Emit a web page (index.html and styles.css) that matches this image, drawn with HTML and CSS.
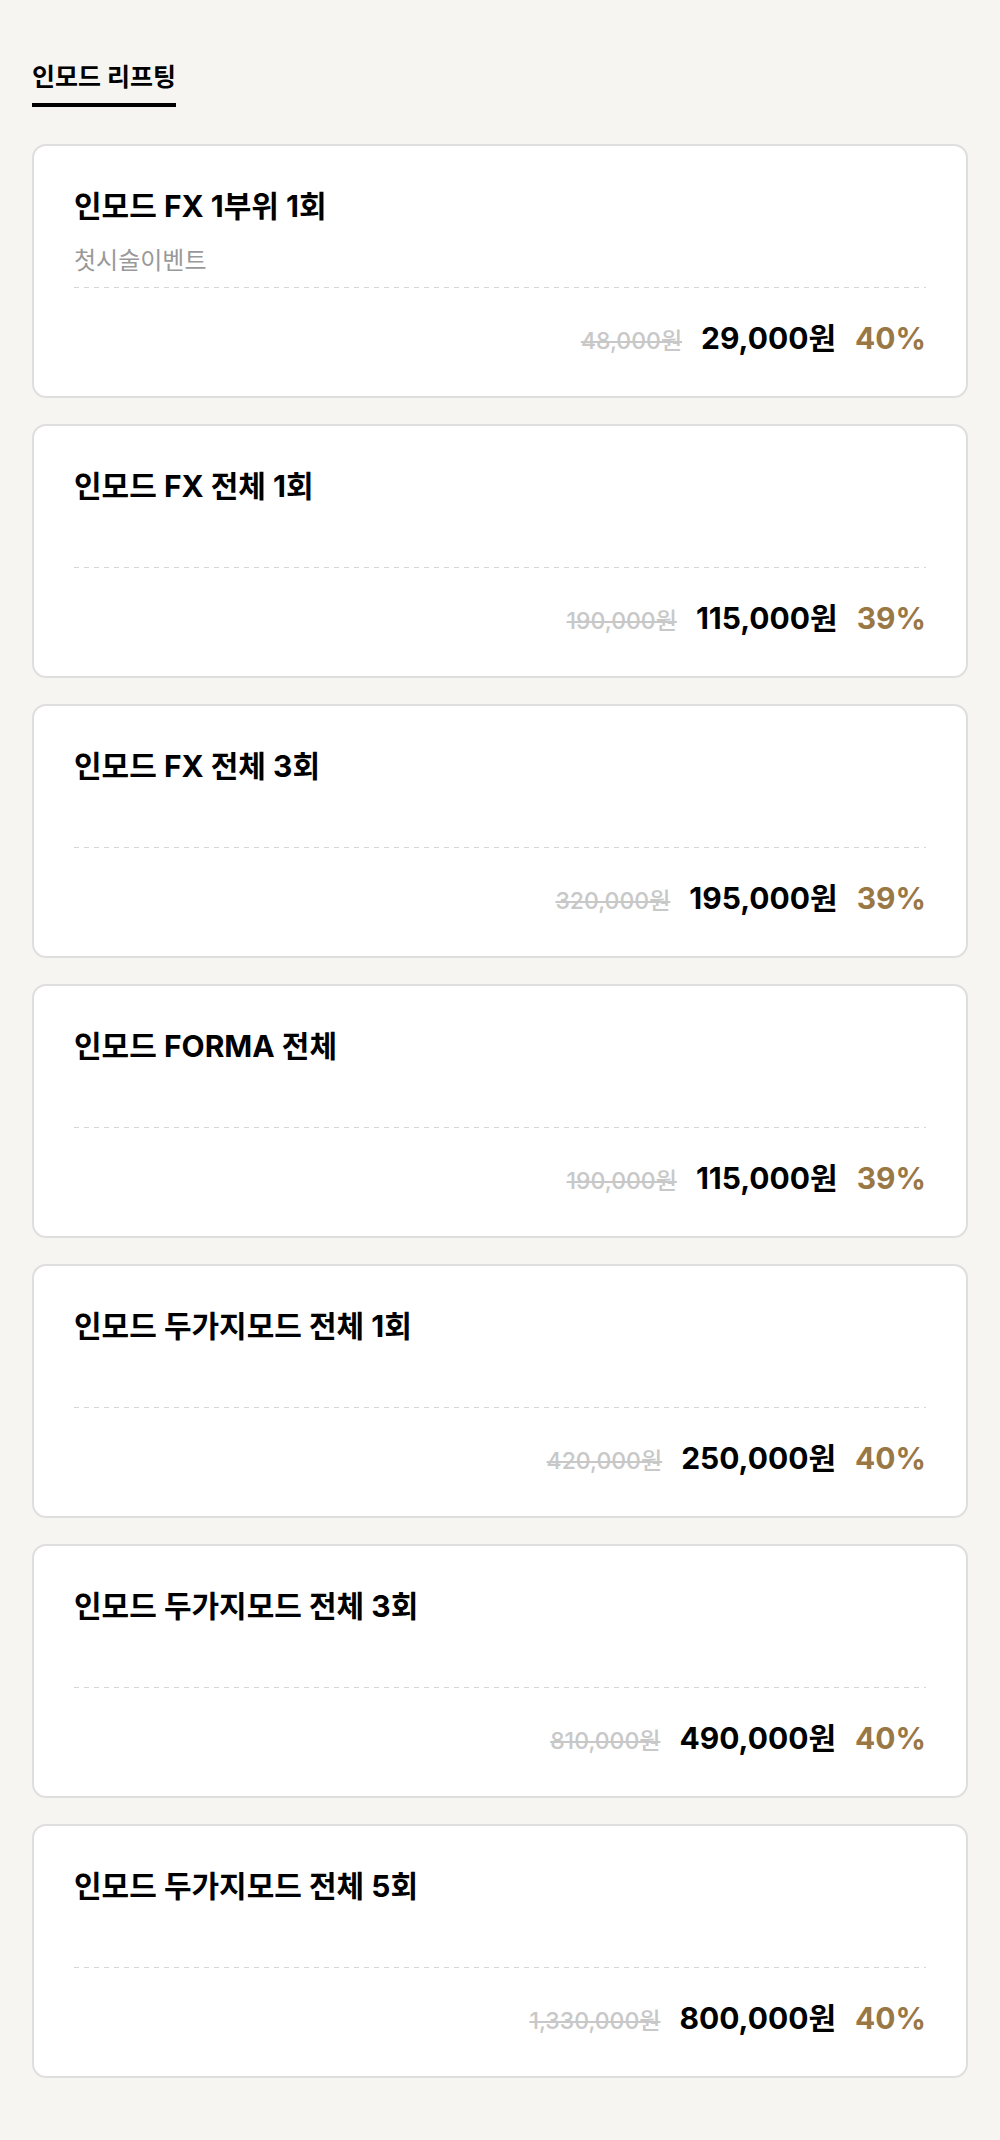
FILE: index.html
```html
<!DOCTYPE html>
<html lang="ko">
<head>
  <meta charset="UTF-8" />
  <meta name="viewport" content="width=device-width, initial-scale=1.0"/>
  <title>인모드 리프팅</title>
  <link rel="stylesheet" href="styles.css">
</head>
<body>
  <div class="page">
    <div class="tabs">
      <span class="tab active">인모드 리프팅</span>
    </div>

    <div class="list">
      <div class="card">
        <div class="card-head">
          <div class="title">인모드 FX 1부위 1회</div>
          <div class="sub">첫시술이벤트</div>
        </div>
        <div class="price-row">
          <span class="origin">48,000원</span>
          <span class="price">29,000원</span>
          <span class="rate">40%</span>
        </div>
      </div>

      <div class="card">
        <div class="card-head">
          <div class="title">인모드 FX 전체 1회</div>
        </div>
        <div class="price-row">
          <span class="origin">190,000원</span>
          <span class="price">115,000원</span>
          <span class="rate">39%</span>
        </div>
      </div>

      <div class="card">
        <div class="card-head">
          <div class="title">인모드 FX 전체 3회</div>
        </div>
        <div class="price-row">
          <span class="origin">320,000원</span>
          <span class="price">195,000원</span>
          <span class="rate">39%</span>
        </div>
      </div>

      <div class="card">
        <div class="card-head">
          <div class="title">인모드 FORMA 전체</div>
        </div>
        <div class="price-row">
          <span class="origin">190,000원</span>
          <span class="price">115,000원</span>
          <span class="rate">39%</span>
        </div>
      </div>

      <div class="card">
        <div class="card-head">
          <div class="title">인모드 두가지모드 전체 1회</div>
        </div>
        <div class="price-row">
          <span class="origin">420,000원</span>
          <span class="price">250,000원</span>
          <span class="rate">40%</span>
        </div>
      </div>

      <div class="card">
        <div class="card-head">
          <div class="title">인모드 두가지모드 전체 3회</div>
        </div>
        <div class="price-row">
          <span class="origin">810,000원</span>
          <span class="price">490,000원</span>
          <span class="rate">40%</span>
        </div>
      </div>

      <div class="card">
        <div class="card-head">
          <div class="title">인모드 두가지모드 전체 5회</div>
        </div>
        <div class="price-row">
          <span class="origin">1,330,000원</span>
          <span class="price">800,000원</span>
          <span class="rate">40%</span>
        </div>
      </div>
    </div>
  </div>
</body>
</html>
```

FILE: styles.css
```css
body {
  margin: 0;
  background-color: #f6f5f1;
  font-family: Inter, "Noto Sans CJK KR", sans-serif;
  color: #000;
}
.page {
  padding: 62px 32px 60px;
}
.tabs {
  display: flex;
  margin-bottom: 37px;
}
.tab {
  font-size: 25px;
  line-height: 30px;
  font-weight: 700;
  padding-bottom: 11px;
}
.tab.active {
  border-bottom: 4px solid #000;
}
.list {
  display: flex;
  flex-direction: column;
  gap: 26px;
}
.card {
  background: #fff;
  border: 2px solid #dedede;
  border-radius: 14px;
  padding: 0 40px;
}
.card-head {
  height: 142px;
  box-sizing: border-box;
  padding-top: 40px;
  background-image: linear-gradient(to right, #d6d6d6 50%, transparent 50%);
  background-size: 10px 1px;
  background-repeat: repeat-x;
  background-position: left bottom;
}
.title {
  font-size: 30px;
  line-height: 40px;
  font-weight: 700;
}
.sub {
  margin-top: 20px;
  font-size: 24px;
  line-height: 30px;
  color: #999;
}
.price-row {
  height: 108px;
  box-sizing: border-box;
  display: flex;
  justify-content: flex-end;
  align-items: baseline;
  gap: 19px;
  padding-top: 29px;
  line-height: 42px;
}
.origin {
  font-size: 23px;
  color: #c8c8c8;
  text-decoration: line-through;
  font-weight: 500;
}
.price {
  font-size: 30px;
  font-weight: 700;
}
.rate {
  font-size: 30px;
  font-weight: 700;
  color: #9a7846;
}
```
